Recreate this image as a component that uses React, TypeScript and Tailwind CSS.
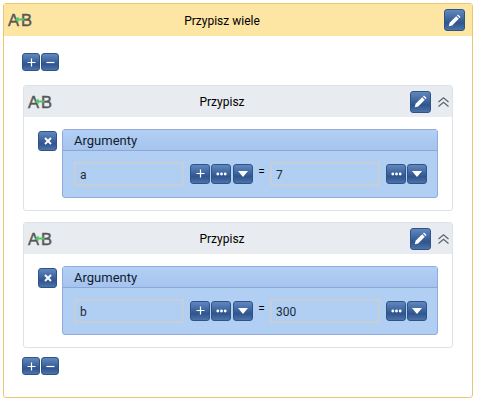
import type { ReactNode } from "react";

function AssignIcon() {
  return (
    <div className="relative flex h-[18px] w-[24px] shrink-0 items-center justify-between font-['Liberation_Sans',sans-serif] text-[16.5px] leading-[18px] text-[#555] [-webkit-text-stroke:0.4px_#555]">
      <span>A</span>
      <span>B</span>
      <svg width="10" height="7" viewBox="0 0 10 7" className="absolute left-[7px] top-[5px]">
        <path d="M0 3.5 L3.5 0.5 L3.5 2.5 L9.5 2.5 L9.5 4.5 L3.5 4.5 L3.5 6.5 Z" fill="#4fc46a" />
      </svg>
    </div>
  );
}

function BlueButton({ className, children }: { className: string; children: ReactNode }) {
  return (
    <div className={`flex shrink-0 items-center justify-center rounded-[3px] border border-[#2f5287] bg-linear-to-b from-[#6088bf] via-[#30558e] via-65% to-[#4d73a9] ${className}`}>
      {children}
    </div>
  );
}

const Plus = () => (
  <svg width="9" height="9" viewBox="0 0 9 9"><path d="M4.5 0.5V8.5M0.5 4.5H8.5" stroke="#fff" strokeWidth="1.2" /></svg>
);
const Minus = () => (
  <svg width="9" height="9" viewBox="0 0 9 9"><path d="M0.5 4.5H8.5" stroke="#fff" strokeWidth="1.2" /></svg>
);
const Dots = () => (
  <svg width="11" height="4" viewBox="0 0 11 4"><circle cx="1.8" cy="2" r="1.4" fill="#fff" /><circle cx="5.5" cy="2" r="1.4" fill="#fff" /><circle cx="9.2" cy="2" r="1.4" fill="#fff" /></svg>
);
const Down = () => (
  <svg width="10" height="6" viewBox="0 0 10 6"><path d="M0 0H10L5 6Z" fill="#fff" /></svg>
);
const Cross = () => (
  <svg width="8" height="8" viewBox="0 0 8 8"><path d="M1 1L7 7M7 1L1 7" stroke="#fff" strokeWidth="1.9" /></svg>
);
const Pencil = () => (
  <svg width="13" height="13" viewBox="0 0 13 13">
    <path d="M0.8 12.2L1.6 8.8L8.2 2.2L10.8 4.8L4.2 11.4Z" fill="#fff" />
    <path d="M9 1.4L10 0.4L12.6 3L11.6 4Z" fill="#fff" />
  </svg>
);
const ChevronsUp = () => (
  <svg width="11" height="10" viewBox="0 0 11 10" fill="none" stroke="#5b6470" strokeWidth="1.2">
    <path d="M0.5 5L5.5 0.8L10.5 5" />
    <path d="M0.5 9.5L5.5 5.3L10.5 9.5" />
  </svg>
);

function AddRemove() {
  return (
    <div className="flex gap-px">
      <BlueButton className="h-[18px] w-[18px]"><Plus /></BlueButton>
      <BlueButton className="h-[18px] w-[18px]"><Minus /></BlueButton>
    </div>
  );
}

function ValueBox({ value }: { value: string }) {
  return (
    <div className="flex h-[24px] w-[110px] shrink-0 items-center border-2 border-[#c6cfd9] pl-[4px] pt-px text-[12px] text-[#1d2a3a]">
      {value}
    </div>
  );
}

function AssignCard({ name, value }: { name: string; value: string }) {
  return (
    <section className="rounded-[3px] border border-[#dde1e8] bg-white">
      <header className="flex h-[31px] items-center bg-[#e8ebef] pl-[4px] pr-[3px]">
        <AssignIcon />
        <span className="flex-1 pr-[18px] pt-px text-center text-[12px] text-black">Przypisz</span>
        <BlueButton className="mr-[7px] h-[22px] w-[21px]"><Pencil /></BlueButton>
        <ChevronsUp />
      </header>
      <div className="flex gap-[5px] px-[14px] py-[12px]">
        <BlueButton className="mt-[2px] h-[20px] w-[19px]"><Cross /></BlueButton>
        <div className="w-[378px] rounded-[3px] border border-[#92abdc] bg-[#b0cff2]">
          <div className="flex h-[21px] items-center border-b border-[#8ba7d9] bg-linear-to-b from-[#b3d1f6] to-[#a5c3ec] pl-[11px] pt-[2px] text-[13px] text-[#10202f]">
            Argumenty
          </div>
          <div className="flex items-center py-[11px] pl-[11px]">
            <ValueBox value={name} />
            <div className="-mt-[1px] ml-[6px] flex gap-[1px]">
              <BlueButton className="h-[20px] w-[20px]"><Plus /></BlueButton>
              <BlueButton className="h-[20px] w-[20px]"><Dots /></BlueButton>
              <BlueButton className="ml-px h-[20px] w-[20px]"><Down /></BlueButton>
            </div>
            <span className="-mt-[5px] w-[17px] text-center text-[12px] leading-none text-black">=</span>
            <ValueBox value={value} />
            <div className="-mt-[1px] ml-[6px] flex gap-[1px]">
              <BlueButton className="h-[20px] w-[20px]"><Dots /></BlueButton>
              <BlueButton className="h-[20px] w-[20px]"><Down /></BlueButton>
            </div>
          </div>
        </div>
      </div>
    </section>
  );
}

export default function App() {
  return (
    <div className="h-[402px] w-[477px] bg-white p-[3px] font-['Roboto',sans-serif]">
      <div className="h-[395px] w-[470px] rounded-[3px] border border-[#ecc673] bg-white">
        <header className="flex h-[32px] items-center bg-[#fde5a3] pl-[4px] pr-[7px]">
          <AssignIcon />
          <span className="flex-1 pr-[32px] pt-px text-center text-[12px] text-black">Przypisz wiele</span>
          <BlueButton className="h-[22px] w-[21px]"><Pencil /></BlueButton>
        </header>
        <div className="flex flex-col pl-[18px] pt-[17px]">
          <AddRemove />
          <div className="ml-px mt-[14px] flex w-[430px] flex-col gap-[11px]">
            <AssignCard name="a" value="7" />
            <AssignCard name="b" value="300" />
          </div>
          <div className="mt-[9px]">
            <AddRemove />
          </div>
        </div>
      </div>
    </div>
  );
}
